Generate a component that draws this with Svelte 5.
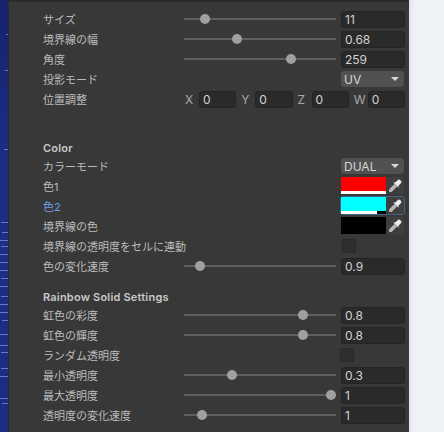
<script>
  // thumb position is given in px along the 152px track
  const transform = [
    { label: "サイズ", value: "11", thumb: 21 },
    { label: "境界線の幅", value: "0.68", thumb: 53 },
    { label: "角度", value: "259", thumb: 107 }
  ];
  const offsets = [
    { axis: "X", value: "0" },
    { axis: "Y", value: "0" },
    { axis: "Z", value: "0" },
    { axis: "W", value: "0" }
  ];
  const rainbowTop = [
    { label: "虹色の彩度", value: "0.8", thumb: 119 },
    { label: "虹色の輝度", value: "0.8", thumb: 119 }
  ];
  const rainbowBottom = [
    { label: "最小透明度", value: "0.3", thumb: 48 },
    { label: "最大透明度", value: "1", thumb: 147 },
    { label: "透明度の変化速度", value: "1", thumb: 18 }
  ];
  // bright specks on the scene behind the inspector: [y, width]
  const specks = [
    [34, 2], [70, 3], [149, 4], [222, 7], [232, 6], [240, 8], [246, 7], [254, 8], [262, 8],
    [270, 8], [278, 7], [286, 8], [296, 7], [304, 8], [312, 8], [320, 6], [334, 8], [345, 8],
    [352, 7], [368, 7], [376, 8], [398, 8], [403, 6]
  ];
</script>

{#snippet slider(row)}
  <div class="row">
    <span class="label">{row.label}</span>
    <div class="track"><i class="thumb" style="left: {row.thumb}px"></i></div>
    <div class="field value">{row.value}</div>
  </div>
{/snippet}

{#snippet dropdown(label, value)}
  <div class="row">
    <span class="label">{label}</span>
    <div class="spacer"></div>
    <div class="select"><span>{value}</span><i class="arrow"></i></div>
  </div>
{/snippet}

{#snippet check(label)}
  <div class="row">
    <span class="label">{label}</span>
    <div class="spacer tight"></div>
    <div class="control"><i class="checkbox"></i></div>
  </div>
{/snippet}

{#snippet color(label, fill, alphaWidth, active)}
  <div class="row">
    <span class="label" class:active>{label}</span>
    <div class="spacer tight"></div>
    <div class="color" class:active>
      <div class="swatch">
        <div class="swatch-main" style="background: {fill}"></div>
        <div class="swatch-alpha"><i style="width: {alphaWidth}%"></i></div>
      </div>
      <div class="picker">
        <svg viewBox="0 0 14 14" width="14" height="14">
          <path d="M1.2 13 L1 10.4 L6.4 5 L9 7.6 L3.6 13 Z" fill="#b9b9b9" />
          <path d="M5.2 3.4 L7.2 3.6 L9.4 1.4 A2.2 2.2 0 0 1 12.6 4.6 L10.4 6.8 L10.6 8.8 Z" fill="#ececec" />
        </svg>
      </div>
    </div>
  </div>
{/snippet}

<div class="screen">
  <div class="scene">
    <svg width="8" height="432">
      {#each specks as [y, w]}
        <rect x={8 - w} {y} width={w} height="1" fill="#7f93d8" opacity="0.75" />
      {/each}
    </svg>
  </div>

  <div class="inspector">
    <section class="first">
      {#each transform as row}
        {@render slider(row)}
      {/each}
      {@render dropdown("投影モード", "UV")}
      <div class="row">
        <span class="label">位置調整</span>
        <div class="vector">
          {#each offsets as o}
            <div class="axis">
              <span>{o.axis}</span>
              <div class="field">{o.value}</div>
            </div>
          {/each}
        </div>
      </div>
    </section>

    <section class="color-section">
      <h3>Color</h3>
      {@render dropdown("カラーモード", "DUAL")}
      {@render color("色1", "#ff0000", 100, false)}
      {@render color("色2", "#00ffff", 80, true)}
      {@render color("境界線の色", "#000000", 0, false)}
      {@render check("境界線の透明度をセルに連動")}
      {@render slider({ label: "色の変化速度", value: "0.9", thumb: 16 })}
    </section>

    <section class="rainbow-section">
      <h3>Rainbow Solid Settings</h3>
      {#each rainbowTop as row}
        {@render slider(row)}
      {/each}
      {@render check("ランダム透明度")}
      {#each rainbowBottom as row}
        {@render slider(row)}
      {/each}
    </section>
  </div>

  <div class="page"></div>
</div>

<style>
  :global(body) {
    margin: 0;
    background: #eef1f4;
  }
  .screen {
    display: flex;
    width: 444px;
    height: 432px;
    overflow: hidden;
    font-family: Inter, "Noto Sans CJK JP", sans-serif;
    font-size: 11px;
    color: #bcbcbc;
  }
  .scene {
    flex: 0 0 8px;
    background: linear-gradient(#16226a, #1c2f86 40%, #1c2d80);
    line-height: 0;
  }
  .inspector {
    flex: 0 0 401px;
    box-sizing: border-box;
    padding: 9px 4px 0 34px;
    background: #383838;
    border-top: 2px solid #2b2b2b;
    border-left: 1px solid #242a45;
  }
  .page {
    flex: 1;
    background: linear-gradient(90deg, #dfe3e8, #eef1f5 5px, #f0f2f5);
  }
  .first {
    margin-top: -2px;
  }
  .color-section {
    margin-top: 31px;
  }
  .rainbow-section {
    margin-top: 13px;
  }
  h3 {
    margin: 0;
    height: 16px;
    line-height: 16px;
    font-size: 11px;
    font-weight: 600;
    letter-spacing: 0.2px;
    color: #c8c8c8;
  }
  .row {
    display: flex;
    align-items: center;
    height: 20px;
  }
  .label {
    flex: 0 0 141px;
    white-space: nowrap;
  }
  .label.active {
    color: #6f9fe0;
  }
  .spacer {
    flex: 0 0 157px;
  }
  .spacer.tight {
    flex-basis: 156px;
  }
  .track {
    position: relative;
    flex: 0 0 152px;
    height: 2px;
    margin-right: 5px;
    background: #5f5f5f;
  }
  .thumb {
    position: absolute;
    top: -4px;
    width: 10px;
    height: 10px;
    margin-left: -5px;
    border-radius: 50%;
    background: #a0a0a0;
  }
  .field {
    box-sizing: border-box;
    height: 17px;
    line-height: 16px;
    padding-left: 3px;
    background: #2a2a2a;
    border: 1px solid #242424;
    border-radius: 3px;
    font-size: 12px;
    color: #d2d2d2;
  }
  .value {
    flex: 0 0 64px;
  }
  .select {
    display: flex;
    align-items: center;
    justify-content: space-between;
    box-sizing: border-box;
    width: 63px;
    height: 16px;
    padding: 0 5px 0 3px;
    border-radius: 3px;
    background: #515151;
    font-size: 12px;
    color: #d6d6d6;
  }
  .arrow {
    width: 0;
    height: 0;
    border-left: 4px solid transparent;
    border-right: 4px solid transparent;
    border-top: 4px solid #d8d8d8;
  }
  .vector {
    display: flex;
    gap: 4px;
    flex: 0 0 221px;
  }
  .axis {
    display: flex;
    flex: 1;
    align-items: center;
    font-size: 12px;
    color: #a8a8a8;
  }
  .axis span {
    flex: 0 0 15px;
    padding-left: 1px;
    box-sizing: border-box;
  }
  .axis .field {
    flex: 1;
  }
  .checkbox {
    display: block;
    box-sizing: border-box;
    width: 14px;
    height: 14px;
    background: #2e2e2e;
    border: 1px solid #292929;
    border-radius: 2px;
  }
  .color {
    display: flex;
    align-self: flex-start;
    box-sizing: border-box;
    flex: 0 0 65px;
    height: 19px;
    border: 1px solid transparent;
    border-radius: 3px;
  }
  .color.active {
    border-color: #3f6488;
  }
  .swatch {
    flex: 0 0 45px;
    display: flex;
    flex-direction: column;
  }
  .swatch-main {
    flex: 1;
  }
  .swatch-alpha {
    height: 3px;
    background: #000;
  }
  .swatch-alpha i {
    display: block;
    height: 100%;
    background: #fff;
  }
  .picker {
    display: flex;
    flex: 1;
    align-items: center;
    justify-content: center;
    background: #3f3f3f;
    border-radius: 0 3px 3px 0;
  }
</style>
